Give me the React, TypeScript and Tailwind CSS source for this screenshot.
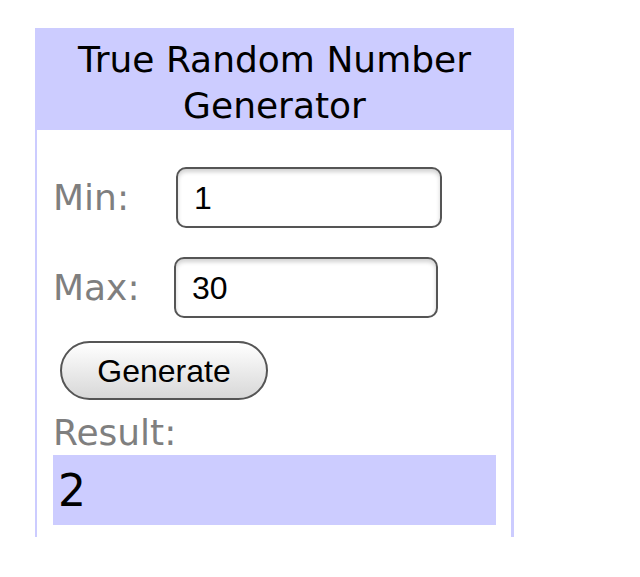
import React from "react";

export default function App() {
  return (
    <div className="w-[640px] h-[577px] bg-white overflow-hidden font-['DejaVu_Sans',Verdana,sans-serif]">
      <div className="ml-[35px] pt-[28px] w-[479px]">
        <div className="bg-[#ccccff] h-[102px] pt-[9px] text-center text-black text-[36px] leading-[46px]">
          <div>True Random Number</div>
          <div>Generator</div>
        </div>
        <div className="border-l-2 border-r-[3px] border-[#ccccff] pl-4 pr-[15px] pt-[37px] pb-[12px]">
          <div className="flex items-center h-[61px]">
            <div className="w-[123px] text-[36px] text-[#7f7f7f]">Min:</div>
            <div className="w-[266px] h-[61px] border-2 border-[#555] rounded-[10px] bg-white shadow-[inset_0_3px_4px_rgba(0,0,0,0.18)] flex items-center pl-[16px] text-[32px] text-black font-['Liberation_Sans',Arial,sans-serif]">
              1
            </div>
          </div>
          <div className="flex items-center h-[61px] mt-[29px]">
            <div className="w-[121px] text-[36px] text-[#7f7f7f]">Max:</div>
            <div className="w-[264px] h-[61px] border-2 border-[#555] rounded-[10px] bg-white shadow-[inset_0_3px_4px_rgba(0,0,0,0.18)] flex items-center pl-[16px] text-[32px] text-black font-['Liberation_Sans',Arial,sans-serif]">
              30
            </div>
          </div>
          <div className="mt-[23px] ml-[7px]">
            <div className="w-[208px] h-[59px] rounded-full border-2 border-[#555] bg-linear-to-b from-white to-[#d8d8d8] flex items-center justify-center text-[32px] text-black font-['Liberation_Sans',Arial,sans-serif]">
              Generate
            </div>
          </div>
          <div className="mt-[12px] h-[42px] leading-[42px] text-[36px] text-[#7f7f7f]">Result:</div>
          <div className="mt-[1px] h-[70px] bg-[#ccccff] flex items-center pl-[5px] pt-[2px] text-[44px] text-black">
            2
          </div>
        </div>
      </div>
    </div>
  );
}
